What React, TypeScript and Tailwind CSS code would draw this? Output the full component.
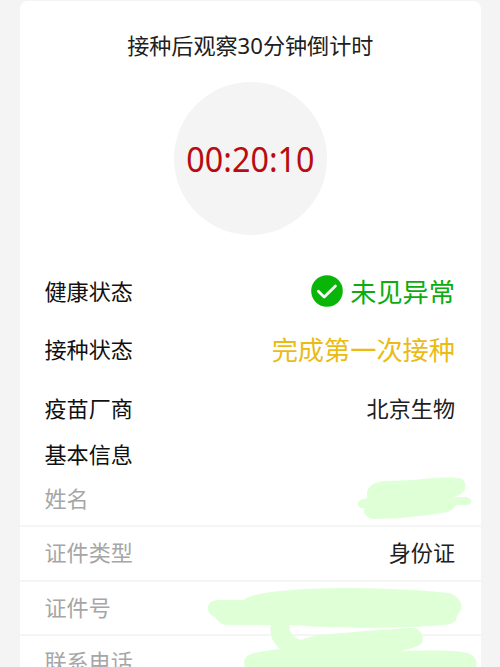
import React from 'react';

interface InfoRow {
  label: string;
  value?: string;
}

const infoRows: InfoRow[] = [
  { label: '姓名' },
  { label: '证件类型', value: '身份证' },
  { label: '证件号' },
  { label: '联系电话' },
];

const CheckBadge = () => (
  <svg className="w-8 h-8 shrink-0" viewBox="0 0 32 32" fill="none">
    <circle cx="16" cy="16" r="15.8" fill="#09b507" />
    <path d="M7.3 16.3 L13.2 22 L24.4 11" stroke="#fff" strokeWidth="2.8" strokeLinecap="round" strokeLinejoin="round" />
  </svg>
);

// Brush strokes that hide the personal data
const BrushMarks = () => (
  <svg className="absolute left-0 top-0 w-[500px] h-[667px] pointer-events-none" viewBox="0 0 500 667" fill="#dfffd7">
    <path d="M367 492 C369 485 376 481 386 481 L414 480 C430 478 446 477 459 478 C465 479 466 484 465 489 C464 493 459 495 454 497 L467 497 C473 499 473 504 467 505 L456 505 C453 510 449 512 443 513 C421 516 397 519 373 519 C366 518 363 513 364 508 C358 509 356 504 359 501 C361 499 364 499 367 498 Z" />
    <path d="M243 600 C253 592 289 589 340 588 C383 588 423 590 449 593 C459 596 463 604 461 610 C458 613 457 616 456 620 C453 625 445 625 430 626 C386 629 334 628 290 625 C288 632 295 639 302 640 C312 634 337 634 365 631 C384 630 402 628 414 628 C424 630 425 642 420 645 C416 647 409 649 402 651 C430 650 458 650 468 653 C475 656 478 661 476 667 L245 667 C242 660 246 655 254 653 C262 651 271 650 280 649 C273 643 269 635 271 625 L228 625 C221 625 218 621 215 617 C209 615 206 609 209 604 C212 600 217 600 222 600 Z" />
  </svg>
);

const App = () => {
  return (
    <div className="relative h-[667px] overflow-hidden bg-[#f4f4f4] pl-5 pr-[19.5px] pt-px font-['Noto_Sans_CJK_SC',sans-serif] text-[22.1px] leading-[32px] text-[#202020]">
      <div className="h-[680px] rounded-t-lg bg-white">
        {/* Countdown */}
        <h1 className="pt-7 text-center font-['Noto_Sans','Noto_Sans_CJK_SC',sans-serif]">
          接种后观察30分钟倒计时
        </h1>
        <div className="mx-auto mt-[21px] flex h-[153px] w-[153px] items-center justify-center rounded-full bg-[#f4f4f4]">
          <span className="inline-block scale-x-[0.95] font-['Noto_Sans',sans-serif] text-[34px] text-[#b80c10]">00:20:10</span>
        </div>

        {/* Vaccination status */}
        <div className="mt-[26px] pl-[24.5px] pr-[25.5px] text-[#101010]">
          <div className="flex h-[58px] items-center justify-between">
            <span>健康状态</span>
            <div className="flex items-center gap-[7px] pt-px text-[26.2px] text-[#0dab0d]">
              <CheckBadge />
              <span>未见异常</span>
            </div>
          </div>
          <div className="flex h-[58px] items-center justify-between">
            <span>接种状态</span>
            <span className="pt-px text-[26.2px] text-[#eabb14]">完成第一次接种</span>
          </div>
          <div className="flex h-[59px] items-center justify-between">
            <span>疫苗厂商</span>
            <span className="text-[#202020]">北京生物</span>
          </div>
        </div>

        {/* Basic info */}
        <h2 className="flex h-[37px] items-center pb-1 px-[24.5px] text-[#101010]">基本信息</h2>
        <div>
          {infoRows.map(row => (
            <div
              key={row.label}
              className="flex h-[54.3px] items-center justify-between border-b-2 border-[#f5f5f5] pb-1 pl-[24.5px] pr-[25.5px]"
            >
              <span className="text-[#a6a6a6]">{row.label}</span>
              {row.value && <span>{row.value}</span>}
            </div>
          ))}
        </div>
      </div>

      <BrushMarks />
    </div>
  );
};

export default App;
